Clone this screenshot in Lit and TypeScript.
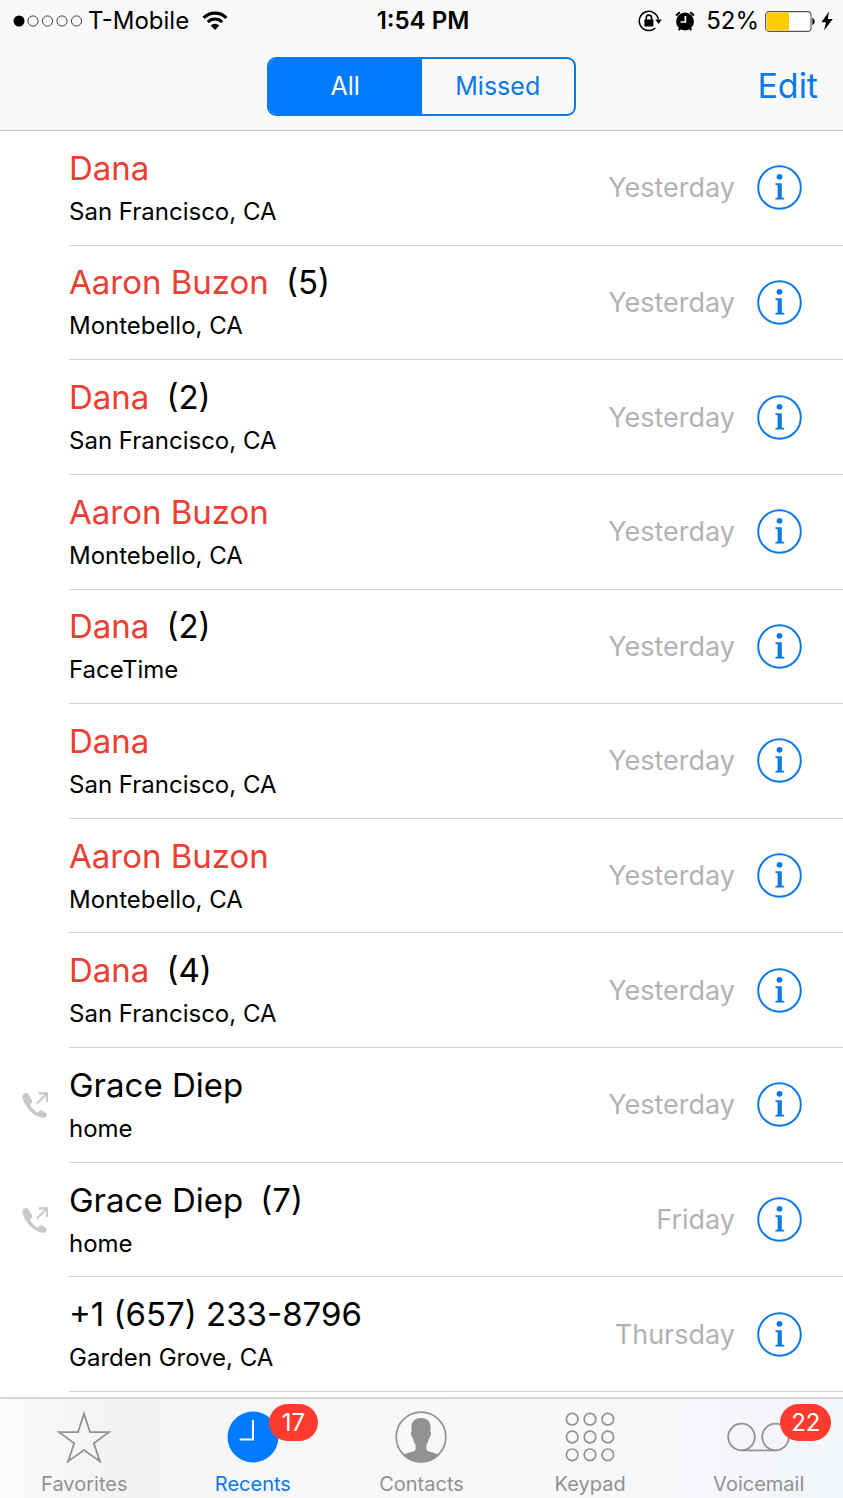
import { LitElement, html, css, svg, nothing } from "lit";
import { customElement, property, state } from "lit/decorators.js";
import { classMap } from "lit/directives/class-map.js";

interface Call {
  name: string;
  place: string;
  day: string;
  count?: number;
  missed?: boolean;
  outgoing?: boolean;
}

const CALLS: Call[] = [
  { name: "Dana", place: "San Francisco, CA", day: "Yesterday", missed: true },
  { name: "Aaron Buzon", count: 5, place: "Montebello, CA", day: "Yesterday", missed: true },
  { name: "Dana", count: 2, place: "San Francisco, CA", day: "Yesterday", missed: true },
  { name: "Aaron Buzon", place: "Montebello, CA", day: "Yesterday", missed: true },
  { name: "Dana", count: 2, place: "FaceTime", day: "Yesterday", missed: true },
  { name: "Dana", place: "San Francisco, CA", day: "Yesterday", missed: true },
  { name: "Aaron Buzon", place: "Montebello, CA", day: "Yesterday", missed: true },
  { name: "Dana", count: 4, place: "San Francisco, CA", day: "Yesterday", missed: true },
  { name: "Grace Diep", place: "home", day: "Yesterday", outgoing: true },
  { name: "Grace Diep", count: 7, place: "home", day: "Friday", outgoing: true },
  { name: "+1 (657) 233-8796", place: "Garden Grove, CA", day: "Thursday" },
];

@customElement("status-bar")
export class StatusBar extends LitElement {
  static styles = css`
    :host {
      display: grid;
      grid-template-columns: 1fr auto 1fr;
      align-items: center;
      height: 42px;
      padding: 0 10px 0 13px;
      font-size: 24px;
      line-height: 42px;
      color: #000;
    }
    .side {
      display: flex;
      align-items: center;
    }
    .right {
      justify-content: flex-end;
    }
    .carrier {
      margin: 0 13px 0 5px;
    }
    .time {
      font-weight: 600;
    }
    .lock {
      margin-right: 13px;
    }
    .alarm {
      margin-right: 11px;
    }
    .battery {
      margin: 0 6px;
    }
    svg {
      display: block;
      flex: none;
    }
  `;

  render() {
    return html`
      <div class="side">
        <svg width="70" height="12" viewBox="0 0 70 12" aria-label="Signal">
          <circle cx="6" cy="6" r="5.5" />
          ${[20, 34.5, 49, 63.5].map(
            (x) => svg`<circle cx=${x} cy="6" r="5.1" fill="none" stroke="#444" stroke-width="1" />`
          )}
        </svg>
        <span class="carrier">T-Mobile</span>
        <svg width="26" height="20" viewBox="0 0 26 20" aria-label="Wi-Fi">
          <path d="M1.6 6.8a16.2 16.2 0 0 1 22.8 0" fill="none" stroke="#000" stroke-width="3.2" />
          <path d="M5.8 11a10.2 10.2 0 0 1 14.4 0" fill="none" stroke="#000" stroke-width="3" />
          <path d="M13 19l-4.3-4.4a6.2 6.2 0 0 1 8.6 0z" />
        </svg>
      </div>
      <span class="time">1:54 PM</span>
      <div class="side right">
        <svg class="lock" width="24" height="22" viewBox="0 0 24 22" aria-label="Rotation lock">
          <path d="M20.3 9.2A9.6 9.6 0 1 0 17.4 18" fill="none" stroke="#000" stroke-width="1.5" />
          <path d="M17.4 9.4h6.400L20.6 14z" />
          <rect x="6.4" y="9.400" width="9" height="7.2" rx="0.8" />
          <path d="M8.2 10V7.8a2.7 2.7 0 0 1 5.4 0V10" fill="none" stroke="#000" stroke-width="1.6" />
        </svg>
        <svg class="alarm" width="20" height="20" viewBox="0 0 20 20" aria-label="Alarm">
          <circle cx="10" cy="10.5" r="8.9" />
          <path d="M1 4.6L4.8 1.2M19 4.6L15.2 1.2" stroke="#000" stroke-width="2" />
          <path d="M3.6 19l2-2M16.4 19l-2-2" stroke="#000" stroke-width="2" />
          <path d="M10.4 5v6H5.6" fill="none" stroke="#fff" stroke-width="1.7" />
        </svg>
        <span>52%</span>
        <svg class="battery" width="50" height="21" viewBox="0 0 50 21" aria-label="Battery">
          <rect x="0.6" y="0.6" width="45.4" height="19.8" rx="3.4" fill="#fff" stroke="#555" stroke-width="1.1" />
          <path d="M3.6 1.6H24v17.8H3.6a2 2 0 0 1-2-2V3.6a2 2 0 0 1 2-2z" fill="#fc0" />
          <path d="M47.4 7c3 1 3 6 0 7z" />
        </svg>
        <svg width="12" height="20" viewBox="0 0 12 20" aria-label="Charging">
          <path d="M8 0.6L0.4 11.200h4.6L3 19.6 11.8 8H6.8z" />
        </svg>
      </div>
    `;
  }
}

@customElement("call-row")
export class CallRow extends LitElement {
  @property({ attribute: false }) call!: Call;

  static styles = css`
    :host {
      display: flex;
      min-width: 0;
    }
    .lead {
      display: flex;
      flex: none;
      align-items: center;
      justify-content: center;
      width: 69px;
    }
    .body {
      display: flex;
      flex: 1;
      align-items: center;
      min-width: 0;
      padding-right: 41px;
      border-bottom: 1px solid #d3d3d5;
    }
    .who {
      flex: 1;
      min-width: 0;
      padding-top: 4px;
      line-height: 44px;
      white-space: nowrap;
    }
    .name {
      font-size: 33px;
    }
    .missed {
      color: #ee3d33;
    }
    .count {
      margin-left: 17px;
      color: #000;
    }
    .place {
      font-size: 24px;
    }
    .day {
      font-size: 27px;
      color: #b2b2b2;
    }
    .info {
      display: block;
      margin: 0 0 0 22px;
      padding: 0;
      border: 0;
      background: none;
      cursor: pointer;
    }
    svg {
      display: block;
    }
  `;

  render() {
    const { name, place, day, count, missed, outgoing } = this.call;
    return html`
      <div class="lead">
        ${outgoing
          ? html`<svg width="26" height="26" viewBox="0 0 26 26" fill="#c8c8c8" aria-label="Outgoing call">
              <path
                d="M2.6 1.4C0.7 2.4 0.2 4 0.8 6.6c0.9 4 3.4 8.200 6.800 11.800 3.600 3.800 7.800 6.400 11.600 7.200 2.600 0.600 4.200-0.100 5.400-1.900 0.600-0.800 0.400-1.700-0.400-2.300l-4-2.800c-0.900-0.600-1.800-0.500-2.500 0.200l-1.300 1.300c-0.500 0.500-1 0.500-1.600 0.100-2.600-1.600-4.800-4-6.400-6.700-0.400-0.600-0.300-1.100 0.200-1.600l1.100-1.300c0.600-0.700 0.700-1.500 0.200-2.300L6.100 2C5.200 0.700 3.900 0.700 2.600 1.400z"
              />
              <path d="M15 11.4L24.4 2M16.8 1.4H25v8.4" fill="none" stroke="#c8c8c8" stroke-width="2.1" />
            </svg>`
          : nothing}
      </div>
      <div class="body">
        <div class="who">
          <div class=${classMap({ name: true, missed: !!missed })}>
            ${name}${count ? html`<span class="count">(${count})</span>` : nothing}
          </div>
          <div class="place">${place}</div>
        </div>
        <span class="day">${day}</span>
        <button class="info" type="button" aria-label="Details for ${name}">
          <svg width="45" height="45" viewBox="0 0 45 45" fill="#0a79ea">
            <circle cx="22.5" cy="22.5" r="21.3" fill="none" stroke="#0a79ea" stroke-width="2" />
            <circle cx="22.5" cy="11.8" r="2.9" />
            <path d="M18.4 18.2h6.4v14.200l2.400 0.500v1.500h-8.800v-1.500l2.200-0.500V20.200l-2.200-0.500z" />
          </svg>
        </button>
      </div>
    `;
  }
}

const GREY = "#929292";

const TABS = [
  {
    label: "Favorites",
    badge: 0,
    icon: html`<svg width="54" height="52" viewBox="0 0 54 52" fill="none" stroke=${GREY} stroke-width="1.8">
      <path d="M27 2.600l6 18.600h19L36.800 32.400 43 50.400 27 39 11 50.400l6.200-18L2 21.200h19z" />
    </svg>`,
  },
  {
    label: "Recents",
    badge: 17,
    icon: html`<svg width="52" height="52" viewBox="0 0 52 52">
      <circle cx="26" cy="26" r="25.5" fill="#007aff" />
      <path d="M26 9v19.4H12.6" fill="none" stroke="#fff" stroke-width="2" />
    </svg>`,
  },
  {
    label: "Contacts",
    badge: 0,
    icon: html`<svg width="52" height="52" viewBox="0 0 52 52">
      <circle cx="26" cy="26" r="24.8" fill="none" stroke=${GREY} stroke-width="1.7" />
      <path
        d="M26 7C19.400 7 16.200 11 16.400 17l0.300 3.600c-0.900 0.400-0.900 1.800-0.500 3.200 0.400 1.900 1 3.200 2 3.600 0.400 2.600 1.200 4.600 2.400 6.200v4.800c-1.400 3-8 2.800-12.800 5.400A25 25 0 0 0 44.200 43.800c-4.800-2.600-11.400-2.400-12.800-5.400v-4.800c1.200-1.600 2-3.600 2.400-6.200 1-0.400 1.600-1.700 2-3.600 0.400-1.400 0.400-2.800-0.500-3.200l0.300-3.600C35.800 11 32.600 7 26 7z"
        fill=${GREY}
      />
    </svg>`,
  },
  {
    label: "Keypad",
    badge: 0,
    icon: html`<svg width="50" height="50" viewBox="0 0 50 50" fill="none" stroke=${GREY} stroke-width="1.7">
      ${[7.2, 25, 42.8].map((y) => [7.2, 25, 42.8].map((x) => svg`<circle cx=${x} cy=${y} r="5.8" />`))}
    </svg>`,
  },
  {
    label: "Voicemail",
    badge: 22,
    icon: html`<svg width="63" height="30" viewBox="0 0 63 30" fill="none" stroke=${GREY} stroke-width="1.8">
      <circle cx="14.5" cy="15" r="13.3" />
      <circle cx="48.5" cy="15" r="13.3" />
      <path d="M14.5 28.3h34" />
    </svg>`,
  },
];

@customElement("app-root")
export class AppRoot extends LitElement {
  @state() private missedOnly = false;
  @state() private tab = "Recents";

  static styles = css`
    :host {
      display: flex;
      flex-direction: column;
      min-height: 100vh;
      background: #fff;
      color: #000;
      font-family: Inter, "Liberation Sans", sans-serif;
    }
    button {
      margin: 0;
      font: inherit;
      cursor: pointer;
    }
    header {
      background: #f9f9f9;
      border-bottom: 1px solid #c4c4c6;
    }
    .nav {
      display: grid;
      grid-template-columns: 1fr auto 1fr;
      align-items: center;
      height: 88px;
      padding: 0 25px;
    }
    .segments {
      display: grid;
      grid-column: 2;
      grid-template-columns: 1fr 1fr;
      width: 305px;
      height: 55px;
      border: 2px solid #0a79ea;
      border-radius: 9px;
      overflow: hidden;
    }
    .segment {
      padding: 0;
      border: 0;
      background: none;
      font-size: 25px;
      color: #0a79ea;
    }
    .segment.on {
      background: #007aff;
      color: #fff;
    }
    .edit {
      justify-self: end;
      padding: 0;
      border: 0;
      background: none;
      font-size: 34px;
      line-height: 40px;
      color: #0a79ea;
    }
    .calls {
      display: grid;
      flex: 1;
      grid-template-rows: repeat(11, minmax(min-content, 1fr));
      margin: 0;
      padding: 0 0 5px;
      list-style: none;
    }
    .calls li {
      display: grid;
    }
    .tabs {
      display: grid;
      grid-template-columns: repeat(5, 1fr);
      border-top: 2px solid #d6d6d8;
      background: linear-gradient(90deg, #fbfbfb 0%, #f3f3f4 14%, #f7f7f8 30%, #f9f9f9 65%, #f2f5fa 100%);
    }
    .tab {
      display: flex;
      flex-direction: column;
      align-items: center;
      padding: 12px 0 0;
      border: 0;
      background: none;
      font-size: 20px;
      line-height: 28px;
      color: #929292;
    }
    .tab.on {
      color: #0a79ea;
    }
    .icon {
      position: relative;
      display: flex;
      align-items: center;
      height: 52px;
      margin-bottom: 7px;
    }
    .icon svg {
      display: block;
    }
    .badge {
      position: absolute;
      top: -7px;
      left: calc(100% - 10px);
      box-sizing: border-box;
      min-width: 49px;
      padding: 0 11px;
      border-radius: 19px;
      background: #ff3b30;
      font-size: 24px;
      line-height: 37px;
      text-align: center;
      color: #fff;
    }
  `;

  render() {
    const calls = this.missedOnly ? CALLS.filter((c) => c.missed) : CALLS;
    return html`
      <header>
        <status-bar></status-bar>
        <div class="nav">
          <div class="segments" role="group" aria-label="Filter calls">
            <button
              type="button"
              class=${classMap({ segment: true, on: !this.missedOnly })}
              @click=${() => (this.missedOnly = false)}
            >
              All
            </button>
            <button
              type="button"
              class=${classMap({ segment: true, on: this.missedOnly })}
              @click=${() => (this.missedOnly = true)}
            >
              Missed
            </button>
          </div>
          <button class="edit" type="button">Edit</button>
        </div>
      </header>
      <ul class="calls">
        ${calls.map((call) => html`<li><call-row .call=${call}></call-row></li>`)}
      </ul>
      <nav class="tabs">
        ${TABS.map(
          (t) => html`<button
            type="button"
            class=${classMap({ tab: true, on: this.tab === t.label })}
            @click=${() => (this.tab = t.label)}
          >
            <span class="icon">${t.icon}${t.badge ? html`<span class="badge">${t.badge}</span>` : nothing}</span>
            <span>${t.label}</span>
          </button>`
        )}
      </nav>
    `;
  }
}
